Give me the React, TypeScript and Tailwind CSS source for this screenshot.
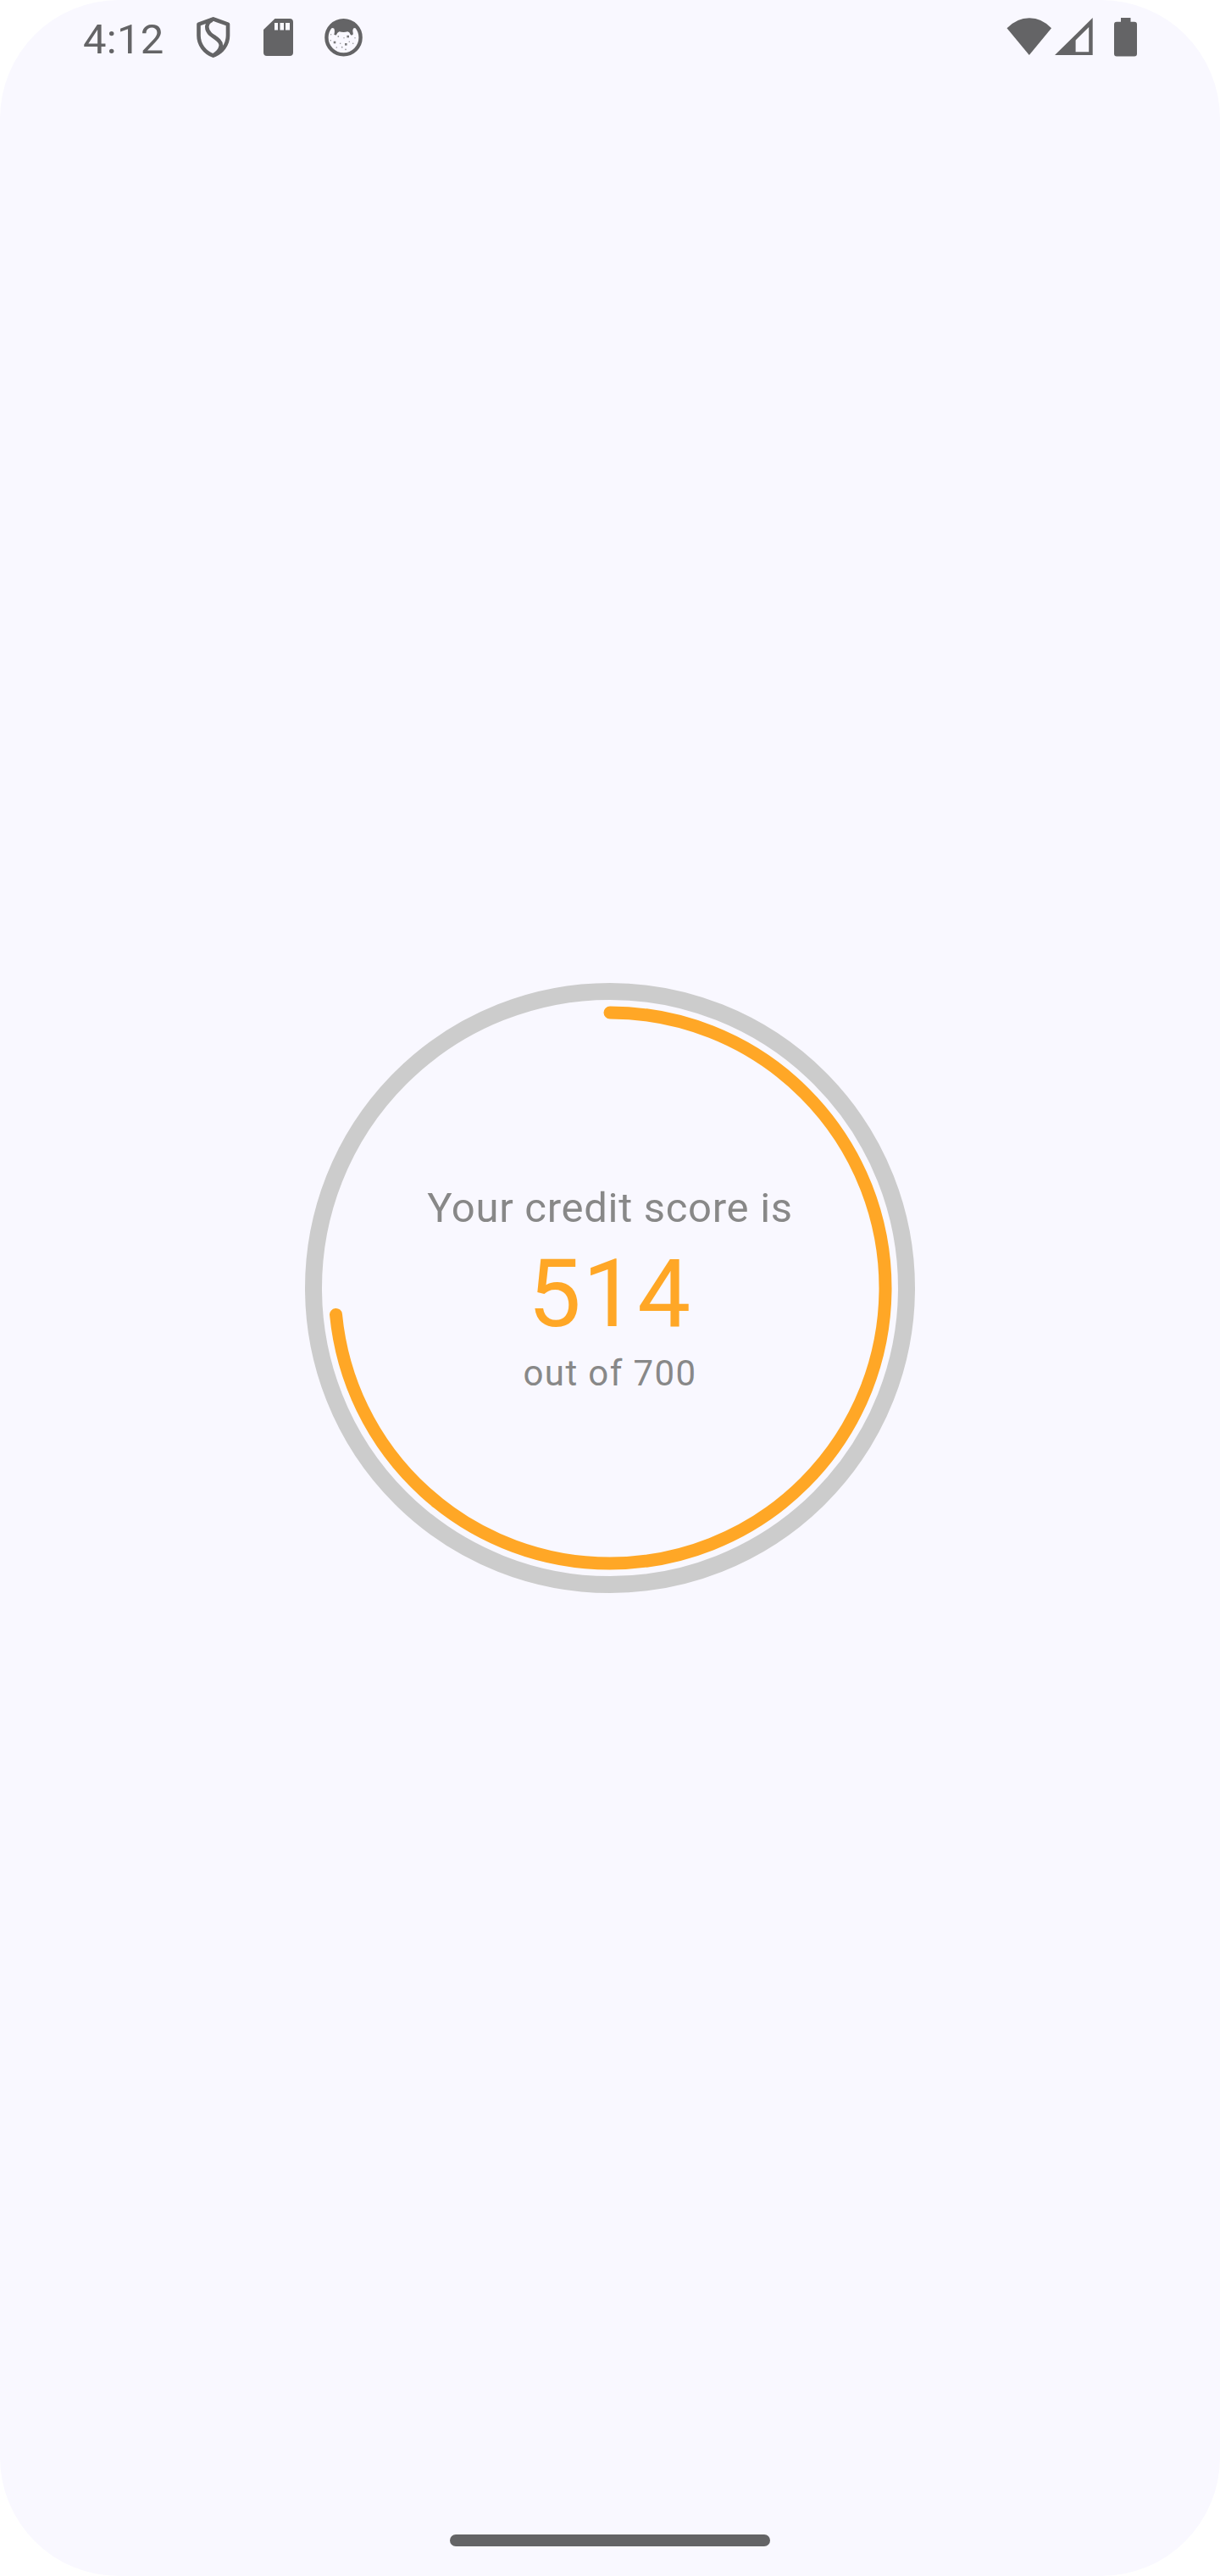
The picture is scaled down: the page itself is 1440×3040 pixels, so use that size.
import React from "react";

const SCORE = 514;
const MAX_SCORE = 700;
const RADIUS = 325;

function ShieldIcon() {
  return (
    <svg viewBox="0 0 41 48" className="h-[48px] w-[41px]" fill="none" stroke="#646466" strokeLinejoin="round">
      <path d="M20.7 2.4 L38 8.6 V22 C38 32.5 31 41.7 20.7 45.6 C10.4 41.7 3.5 32.5 3.5 22 V8.6 Z" strokeWidth="4.6" />
      <path d="M19.5 3.5 C12.5 6.2 11 14 17.3 20.3 C21.5 24 30.5 27.5 29.7 34 C29.3 38 26 42 21.5 45" strokeWidth="4.6" />
    </svg>
  );
}

function SdCardIcon() {
  return (
    <svg viewBox="0 0 36 44" className="h-[44px] w-[36px]">
      <path
        fill="#646466"
        fillRule="evenodd"
        d="M13.5 0H31Q35 0 35 4V40Q35 44 31 44H4Q0 44 0 40V13Z M13 5V13.5H17V5Z M19.5 5V13.5H24V5Z M26 5V13.5H31V5Z"
      />
    </svg>
  );
}

function CatFaceIcon() {
  return (
    <svg viewBox="0 0 46 46" className="h-[46px] w-[46px]">
      <circle cx="22.5" cy="23.3" r="20.1" fill="none" stroke="#646466" strokeWidth="4.4" />
      <path
        fill="#646466"
        d="M7 11.5Q13 2.5 22.5 2.5Q32 2.5 38 11.5L34 12.5Q32.5 15 33.8 19.3Q32.5 21.5 30.8 20Q29.5 16.5 27.3 16.2Q22.5 17.8 17.5 16.2Q15 17 13.8 20.6L11.3 20Q12.6 15 11.2 12.5Z"
      />
      <g fill="#7a7a7c">
        <rect x="26.4" y="20.8" width="2.6" height="2.6" />
        <rect x="10.7" y="27.7" width="2.6" height="2.6" />
        <rect x="24" y="30" width="2.6" height="2.6" />
      </g>
      <g fill="#98989b">
        <circle cx="16.3" cy="22" r=".9" />
        <circle cx="23" cy="23.7" r=".7" />
        <circle cx="7.7" cy="19.7" r=".7" />
        <circle cx="7.2" cy="26.7" r=".8" />
        <circle cx="18.7" cy="30.3" r=".8" />
        <circle cx="29.3" cy="28.3" r=".8" />
        <circle cx="36" cy="23.7" r=".7" />
        <circle cx="33.7" cy="30.3" r=".8" />
        <circle cx="14.3" cy="35" r=".8" />
        <circle cx="20.7" cy="34.7" r=".9" />
        <circle cx="25" cy="37.3" r=".9" />
      </g>
    </svg>
  );
}

function WifiIcon() {
  return (
    <svg viewBox="0 0 54 44" className="h-[44px] w-[54px]" fill="#646466">
      <path d="M0.5 12.3Q12 .2 27 .2Q42 .2 53 12.3L26.8 44Z" />
    </svg>
  );
}

function SignalIcon() {
  return (
    <svg viewBox="0 0 45 44" className="h-[44px] w-[45px]" fill="#646466">
      <path fillRule="evenodd" d="M44.7 0V44H0Z M40.2 11L24.6 26.5V40.2H40.2Z" />
    </svg>
  );
}

function BatteryIcon() {
  return (
    <svg viewBox="0 0 27 46" className="h-[46px] w-[27px]" fill="#646466">
      <path d="M8 0H19.5V4.8H24Q27 4.8 27 7.8V42.6Q27 45.6 24 45.6H3Q0 45.6 0 42.6V7.8Q0 4.8 3 4.8H8Z" />
    </svg>
  );
}

function StatusBar() {
  return (
    <header className="flex h-[90px] items-start justify-between pr-[98px] pl-[98px] pt-[20px] text-[#646466]">
      <div className="flex items-start">
        <span className="-mt-[2px] w-[133px] text-[49px] leading-[57px] tracking-[0.3px]">4:12</span>
        <ShieldIcon />
        <div className="ml-[39px] mt-[2px]">
          <SdCardIcon />
        </div>
        <div className="ml-[36px] mt-[1px]">
          <CatFaceIcon />
        </div>
      </div>
      <div className="flex items-start pt-[1px]">
        <WifiIcon />
        <div className="ml-[3px]">
          <SignalIcon />
        </div>
        <div className="ml-[25px]">
          <BatteryIcon />
        </div>
      </div>
    </header>
  );
}

function ScoreGauge() {
  const circumference = 2 * Math.PI * RADIUS;
  const filled = (SCORE / MAX_SCORE) * circumference;
  return (
    <section className="relative flex size-[720px] flex-col items-center pt-[223px] text-center whitespace-nowrap text-[#888888]">
      <svg viewBox="0 0 720 720" className="absolute inset-0 size-full" fill="none">
        <circle cx="360" cy="360" r="350" stroke="#cccccc" strokeWidth="20" />
        <circle
          cx="360"
          cy="360"
          r={RADIUS}
          stroke="#ffa726"
          strokeWidth="15"
          strokeLinecap="round"
          strokeDasharray={`${filled} ${circumference}`}
          transform="rotate(-90 360 360)"
        />
      </svg>
      <p className="text-[49px] leading-[85px] tracking-[0.7px]">Your credit score is</p>
      <p className="text-[112px] leading-[117px] tracking-[1.75px] text-[#ffa726]">{SCORE}</p>
      <p className="text-[42px] leading-[71px] tracking-[1.4px]">out of {MAX_SCORE}</p>
    </section>
  );
}

export default function App() {
  return (
    <div className="h-[3040px] w-[1440px] bg-white font-['Roboto',sans-serif]">
      <div className="flex h-full w-full flex-col overflow-hidden rounded-[140px] bg-[#f9f8ff]">
        <StatusBar />
        <main className="flex flex-1 justify-center pt-[1070px]">
          <ScoreGauge />
        </main>
        <footer className="flex h-[49px] justify-center">
          <div className="h-[14px] w-[378px] rounded-full bg-[#646466]" />
        </footer>
      </div>
    </div>
  );
}
